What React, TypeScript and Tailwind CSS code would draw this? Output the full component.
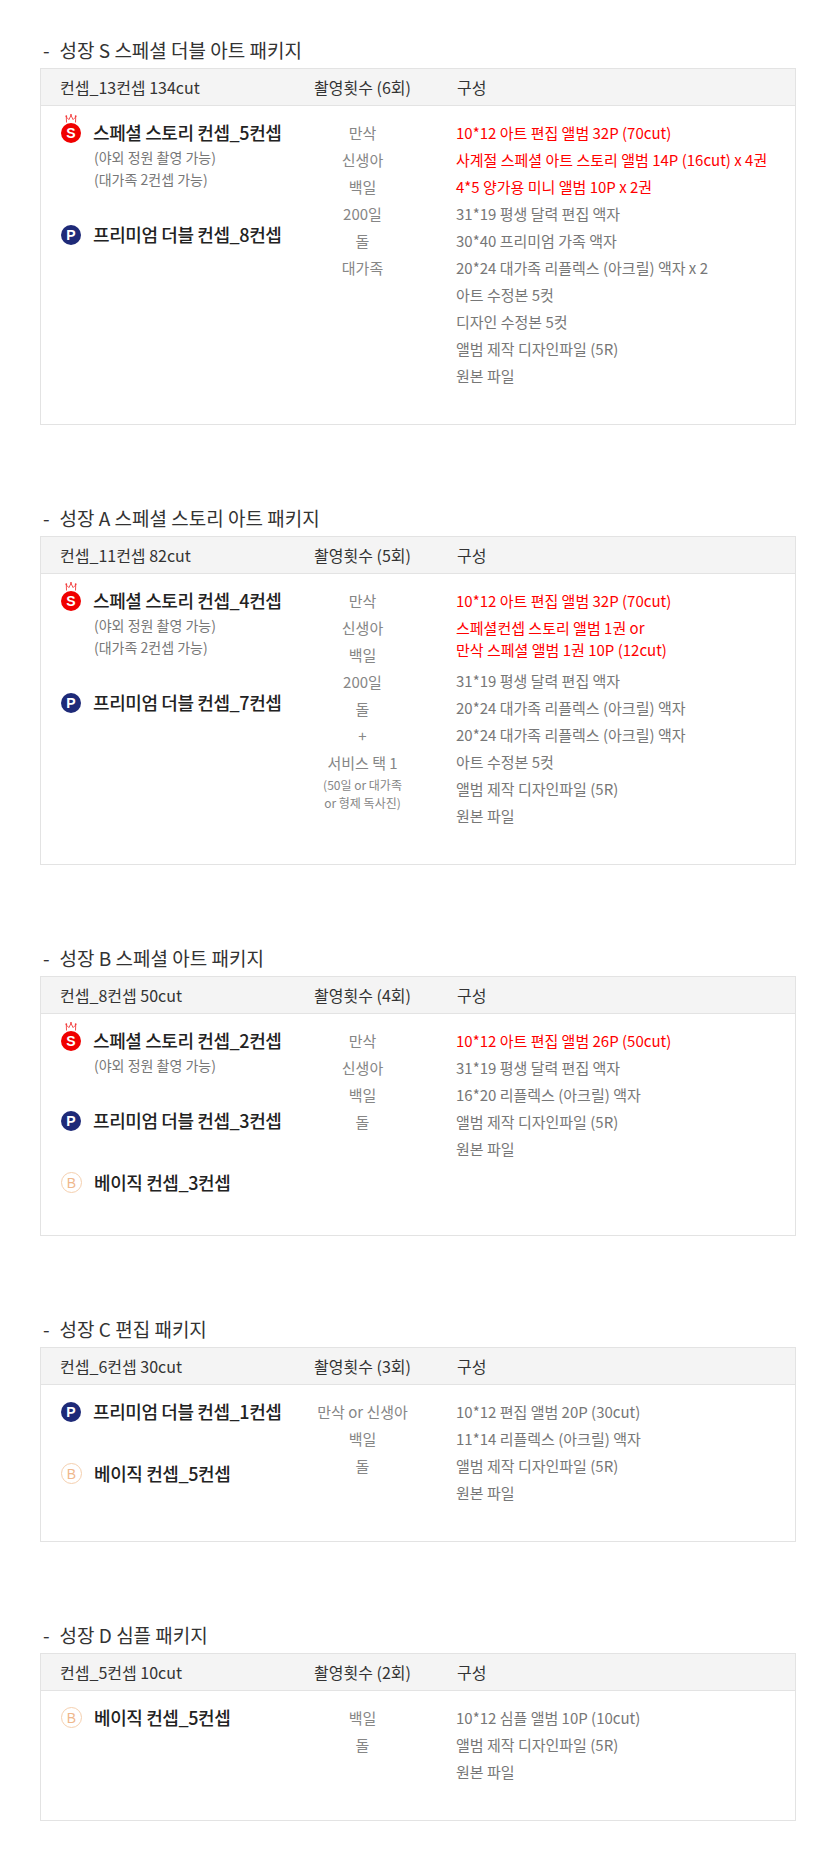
import React from 'react';

type Badge = 'S' | 'P' | 'B';

interface Concept {
  badge: Badge;
  title: string;
  subs?: string[];
}

interface Item {
  lines: string[];
  red?: boolean;
}

interface Pack {
  name: string;
  concept: string;
  shoots: string;
  concepts: Concept[];
  sessions: string[];
  note?: string[];
  items: Item[];
}

const red = (t: string): Item => ({ lines: [t], red: true });
const gray = (t: string): Item => ({ lines: [t] });

const PACKS: Pack[] = [
  {
    name: '성장 S 스페셜 더블 아트 패키지',
    concept: '컨셉_13컨셉 134cut',
    shoots: '촬영횟수 (6회)',
    concepts: [
      { badge: 'S', title: '스페셜 스토리 컨셉_5컨셉', subs: ['(야외 정원 촬영 가능)', '(대가족 2컨셉 가능)'] },
      { badge: 'P', title: '프리미엄 더블 컨셉_8컨셉' },
    ],
    sessions: ['만삭', '신생아', '백일', '200일', '돌', '대가족'],
    items: [
      red('10*12 아트 편집 앨범 32P (70cut)'),
      red('사계절 스페셜 아트 스토리 앨범 14P (16cut) x 4권'),
      red('4*5 양가용 미니 앨범 10P x 2권'),
      gray('31*19 평생 달력 편집 액자'),
      gray('30*40 프리미엄 가족 액자'),
      gray('20*24 대가족 리플렉스 (아크릴) 액자 x 2'),
      gray('아트 수정본 5컷'),
      gray('디자인 수정본 5컷'),
      gray('앨범 제작 디자인파일 (5R)'),
      gray('원본 파일'),
    ],
  },
  {
    name: '성장 A 스페셜 스토리 아트 패키지',
    concept: '컨셉_11컨셉 82cut',
    shoots: '촬영횟수 (5회)',
    concepts: [
      { badge: 'S', title: '스페셜 스토리 컨셉_4컨셉', subs: ['(야외 정원 촬영 가능)', '(대가족 2컨셉 가능)'] },
      { badge: 'P', title: '프리미엄 더블 컨셉_7컨셉' },
    ],
    sessions: ['만삭', '신생아', '백일', '200일', '돌', '+', '서비스 택 1'],
    note: ['(50일 or 대가족', 'or 형제 독사진)'],
    items: [
      red('10*12 아트 편집 앨범 32P (70cut)'),
      { lines: ['스페셜컨셉 스토리 앨범 1권 or', '만삭 스페셜 앨범 1권 10P (12cut)'], red: true },
      gray('31*19 평생 달력 편집 액자'),
      gray('20*24 대가족 리플렉스 (아크릴) 액자'),
      gray('20*24 대가족 리플렉스 (아크릴) 액자'),
      gray('아트 수정본 5컷'),
      gray('앨범 제작 디자인파일 (5R)'),
      gray('원본 파일'),
    ],
  },
  {
    name: '성장 B 스페셜 아트 패키지',
    concept: '컨셉_8컨셉 50cut',
    shoots: '촬영횟수 (4회)',
    concepts: [
      { badge: 'S', title: '스페셜 스토리 컨셉_2컨셉', subs: ['(야외 정원 촬영 가능)'] },
      { badge: 'P', title: '프리미엄 더블 컨셉_3컨셉' },
      { badge: 'B', title: '베이직 컨셉_3컨셉' },
    ],
    sessions: ['만삭', '신생아', '백일', '돌'],
    items: [
      red('10*12 아트 편집 앨범 26P (50cut)'),
      gray('31*19 평생 달력 편집 액자'),
      gray('16*20 리플렉스 (아크릴) 액자'),
      gray('앨범 제작 디자인파일 (5R)'),
      gray('원본 파일'),
    ],
  },
  {
    name: '성장 C 편집 패키지',
    concept: '컨셉_6컨셉 30cut',
    shoots: '촬영횟수 (3회)',
    concepts: [
      { badge: 'P', title: '프리미엄 더블 컨셉_1컨셉' },
      { badge: 'B', title: '베이직 컨셉_5컨셉' },
    ],
    sessions: ['만삭 or 신생아', '백일', '돌'],
    items: [
      gray('10*12 편집 앨범 20P (30cut)'),
      gray('11*14 리플렉스 (아크릴) 액자'),
      gray('앨범 제작 디자인파일 (5R)'),
      gray('원본 파일'),
    ],
  },
  {
    name: '성장 D 심플 패키지',
    concept: '컨셉_5컨셉 10cut',
    shoots: '촬영횟수 (2회)',
    concepts: [{ badge: 'B', title: '베이직 컨셉_5컨셉' }],
    sessions: ['백일', '돌'],
    items: [
      gray('10*12 심플 앨범 10P (10cut)'),
      gray('앨범 제작 디자인파일 (5R)'),
      gray('원본 파일'),
    ],
  },
];

const BadgeIcon: React.FC<{ type: Badge }> = ({ type }) => {
  if (type === 'S') {
    return (
      <span className="relative flex h-[20px] w-[20px] shrink-0 items-center justify-center rounded-full bg-[#f00000] text-[14px] font-bold leading-none text-white [font-family:'Liberation_Sans',Arial,sans-serif]">
        S
        <svg className="absolute left-[4px] top-[-9px]" width="12" height="9" viewBox="0 0 12 9" fill="none">
          <path d="M1.5 8.5 L1.3 3 L3.9 5.6 L6 1.4 L8.1 5.6 L10.7 3 L10.5 8.5" stroke="#f23a3a" strokeWidth="0.9" strokeLinejoin="round" />
          <circle cx="1.3" cy="2.2" r="0.9" fill="#f23a3a" />
          <circle cx="6" cy="0.9" r="0.9" fill="#f23a3a" />
          <circle cx="10.7" cy="2.2" r="0.9" fill="#f23a3a" />
        </svg>
      </span>
    );
  }
  if (type === 'P') {
    return (
      <span className="flex h-[20px] w-[20px] shrink-0 items-center justify-center rounded-full bg-[#1e2a78] text-[14px] font-bold leading-none text-white [font-family:'Liberation_Sans',Arial,sans-serif]">
        P
      </span>
    );
  }
  return (
    <span className="flex h-[21px] w-[21px] shrink-0 items-center justify-center rounded-full border border-[#f5cfae] text-[14px] leading-none text-[#efb88c] [font-family:'Liberation_Sans',Arial,sans-serif]">
      B
    </span>
  );
};

const PackTable: React.FC<{ pack: Pack }> = ({ pack }) => (
  <section className="mx-[40px] mb-[75px] w-[756px] last:mb-0">
    <h2 className="flex h-[36px] items-center pl-[3px] text-[19px] text-[#333]">
      <span>-</span>
      <span className="ml-[10px]">{pack.name}</span>
    </h2>
    <div className="border border-[#e3e3e3]">
      <div className="flex h-[37px] items-center border-b border-[#e3e3e3] bg-[#f4f4f4] text-[16px] text-[#333]">
        <div className="w-[259px] pl-[19px]">{pack.concept}</div>
        <div className="w-[125px] text-center">{pack.shoots}</div>
        <div className="pl-[32px]">구성</div>
      </div>
      <div className="flex pb-[35px] pt-[13px]">
        <div className="flex w-[259px] flex-col gap-[31px] pl-[20px]">
          {pack.concepts.map((c) => (
            <div key={c.title} className={c.subs ? '' : 'pb-[4px]'}>
              <div className="flex h-[27px] items-center gap-[12px]">
                <BadgeIcon type={c.badge} />
                <span className="text-[18px] font-medium tracking-[-0.4px] text-[#222]">{c.title}</span>
              </div>
              {c.subs?.map((s) => (
                <div key={s} className="pl-[33px] text-[14px] leading-[22px] text-[#777]">
                  {s}
                </div>
              ))}
            </div>
          ))}
        </div>
        <div className="flex w-[125px] flex-col text-center text-[15px] text-[#868686]">
          {pack.sessions.map((s, i) => (
            <div key={i} className="leading-[27px]">
              {s}
            </div>
          ))}
          {pack.note && (
            <div className="text-[12px] leading-[18px]">
              {pack.note.map((n) => (
                <div key={n}>{n}</div>
              ))}
            </div>
          )}
        </div>
        <div className="flex flex-col pl-[31px] text-[15px]">
          {pack.items.map((it, i) => (
            <div
              key={i}
              className={`pt-[2.5px] leading-[22px] ${it.lines.length > 1 ? 'pb-[6.5px]' : 'pb-[2.5px]'} ${it.red ? 'text-[#ff0000]' : 'text-[#777]'}`}
            >
              {it.lines.map((l) => (
                <div key={l}>{l}</div>
              ))}
            </div>
          ))}
        </div>
      </div>
    </div>
  </section>
);

export default function App() {
  return (
    <div className="min-h-[1850px] w-[835px] bg-white pb-[24px] pt-[32px] [font-family:'Noto_Sans_CJK_KR','Noto_Sans',sans-serif]">
      {PACKS.map((p) => (
        <PackTable key={p.name} pack={p} />
      ))}
    </div>
  );
}
